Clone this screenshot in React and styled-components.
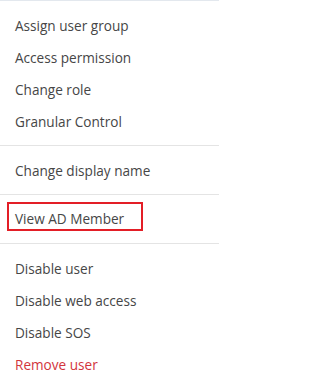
import React from "react";
import styled, { createGlobalStyle } from "styled-components";

const Global = createGlobalStyle`
  html, body { margin: 0; padding: 0; background: #fff; }
  body { font-family: "Open Sans", "Liberation Sans", sans-serif; }
`;

const Menu = styled.div`
  width: 219px;
  height: 388px;
  box-sizing: border-box;
  border-top: 1px solid #e3e8ee;
  background: #fff;
  display: flex;
  flex-direction: column;
`;

const Group = styled.div`
  display: flex;
  flex-direction: column;
  padding: 8px 0;
  & + & { border-top: 1px solid #e4e4e4; }
`;

const Item = styled.div`
  height: 32px;
  display: flex;
  align-items: center;
  padding-left: 15px;
  font-size: 13.6px;
  color: ${(p) => (p.$danger ? "#d2343c" : "#464646")};
  white-space: nowrap;
`;

const HighlightItem = styled(Item)`
  box-sizing: border-box;
  width: 136px;
  height: 29px;
  margin: -1px 0 4px 7px;
  padding: 3px 0 0 6px;
  border: 2px solid #e31e26;
`;

export default function App() {
  return (
    <>
      <Global />
      <Menu>
        <Group>
          <Item>Assign user group</Item>
          <Item>Access permission</Item>
          <Item>Change role</Item>
          <Item>Granular Control</Item>
        </Group>
        <Group>
          <Item>Change display name</Item>
        </Group>
        <Group>
          <HighlightItem>View AD Member</HighlightItem>
        </Group>
        <Group>
          <Item>Disable user</Item>
          <Item>Disable web access</Item>
          <Item>Disable SOS</Item>
          <Item $danger>Remove user</Item>
        </Group>
      </Menu>
    </>
  );
}
